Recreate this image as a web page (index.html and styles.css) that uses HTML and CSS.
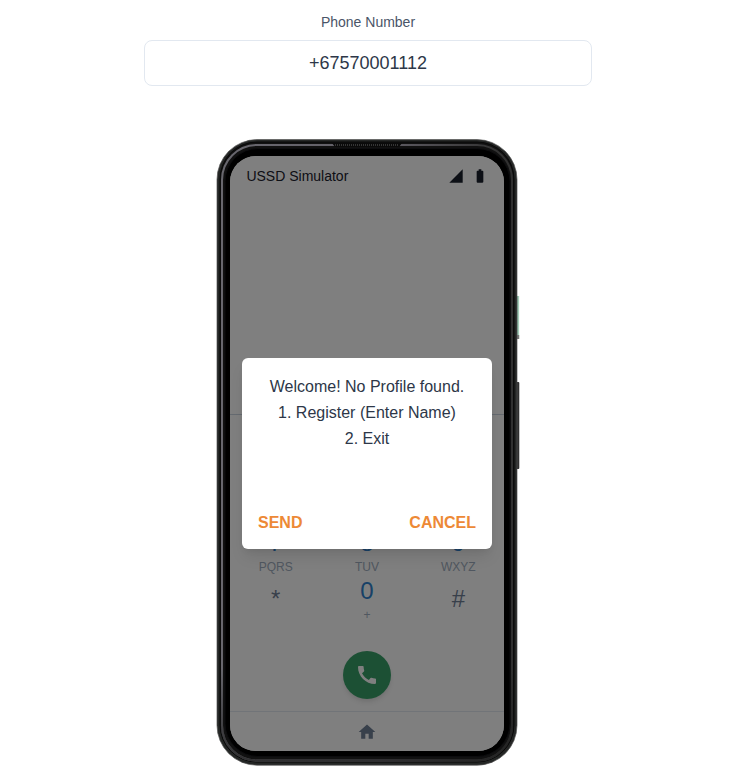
FILE: index.html
```html
<!DOCTYPE html>
<html lang="en">
<head>
<meta charset="utf-8">
<title>USSD Simulator</title>
<link rel="stylesheet" href="styles.css">
</head>
<body>
<main class="page">
  <label class="label" for="phone">Phone Number</label>
  <input class="number" id="phone" type="text" value="+67570001112">
  <section class="phone">
    <svg class="frame" width="306" height="628" viewBox="0 0 306 628" aria-hidden="true">
      <defs>
        <linearGradient id="rim" x1="0" y1="0" x2="1" y2="0">
          <stop offset="0" stop-color="#68676e"/><stop offset=".55" stop-color="#625f67"/><stop offset=".94" stop-color="#333"/><stop offset="1" stop-color="#303030"/>
        </linearGradient>
        <linearGradient id="shade" x1="0" y1="0" x2="0" y2="1">
          <stop offset="0" stop-color="#111" stop-opacity="0"/><stop offset=".85" stop-color="#111" stop-opacity="0"/><stop offset="1" stop-color="#222" stop-opacity=".8"/>
        </linearGradient>
        <linearGradient id="power" x1="0" y1="0" x2="1" y2="0">
          <stop offset="0" stop-color="#5f8f7b"/><stop offset="1" stop-color="#b9dfcc"/>
        </linearGradient>
      </defs>
      <rect x="299" y="157" width="3.2" height="43" fill="url(#power)"/>
      <rect x="299" y="196" width="3.2" height="4" fill="#777"/>
      <rect x="299" y="243" width="3.3" height="87" rx="1" fill="#303030"/>
      <rect x="0" y=".6" width="300" height="625.6" rx="40" fill="#242625" stroke="#555" stroke-width=".7"/>
      <rect x="3" y="3" width="294" height="620" rx="37" fill="#111" stroke="#090909"/>
      <rect x="5" y="6" width="290" height="615.5" rx="35" fill="none" stroke="url(#rim)" stroke-width="2"/>
      <rect x="5" y="6" width="290" height="615.5" rx="35" fill="none" stroke="url(#shade)" stroke-width="2.2"/>
      <rect x="8" y="9.5" width="285" height="608" rx="33" fill="#000" stroke="#0c0c0e"/>
      <path d="M115 4h70l-3 4h-64z" fill="#0a0a0a"/>
      <path d="M118 6h64" stroke="#444" stroke-width="1.4" stroke-dasharray="1 1"/>
    </svg>
    <div class="screen">
      <header class="status">
        <span>USSD Simulator</span>
        <span class="status-icons">
          <svg width="16" height="16" viewBox="0 0 24 24"><path d="M2 22h20V2z"/></svg>
          <svg width="16" height="16" viewBox="0 0 24 24"><path d="M15.67 4H14V2h-4v2H8.33C7.6 4 7 4.6 7 5.33v15.33C7 21.4 7.6 22 8.33 22h7.33c.74 0 1.34-.6 1.34-1.33V5.33C17 4.6 16.4 4 15.67 4z"/></svg>
        </span>
      </header>
      <div class="display"></div>
      <div class="keypad">
        <div class="key"><b>1</b></div>
        <div class="key"><b>2</b><small>ABC</small></div>
        <div class="key"><b>3</b><small>DEF</small></div>
        <div class="key"><b>4</b><small>GHI</small></div>
        <div class="key"><b>5</b><small>JKL</small></div>
        <div class="key"><b>6</b><small>MNO</small></div>
        <div class="key"><b>7</b><small>PQRS</small></div>
        <div class="key"><b>8</b><small>TUV</small></div>
        <div class="key"><b>9</b><small>WXYZ</small></div>
        <div class="key symbol"><b>*</b></div>
        <div class="key"><b>0</b><small>+</small></div>
        <div class="key symbol"><b>#</b></div>
      </div>
      <button class="call" aria-label="Call">
        <svg width="24" height="24" viewBox="0 0 24 24"><path d="M20.01 15.38c-1.23 0-2.42-.2-3.53-.56a.977.977 0 0 0-1.01.24l-1.57 1.97c-2.83-1.35-5.48-3.9-6.89-6.83l1.95-1.66c.27-.28.35-.67.24-1.02-.37-1.11-.56-2.3-.56-3.53 0-.54-.45-.99-.99-.99H4.19C3.65 3 3 3.24 3 3.99 3 13.28 10.73 21 20.01 21c.71 0 .99-.63.99-1.18v-3.45c0-.54-.45-.99-.99-.99z"/></svg>
      </button>
      <nav class="nav">
        <svg width="20" height="20" viewBox="0 0 24 24"><path d="M10 20v-6h4v6h5v-8h3L12 3 2 12h3v8z"/></svg>
      </nav>
      <div class="overlay">
        <div class="dialog">
          <p class="message">Welcome! No Profile found.<br>1. Register (Enter Name)<br>2. Exit</p>
          <div class="actions"><button>SEND</button><button>CANCEL</button></div>
        </div>
      </div>
    </div>
  </section>
</main>
</body>
</html>
```
FILE: styles.css
```css
* { box-sizing: border-box; }
body {
  margin: 0;
  background: #fff;
  color: #1a202c;
  font: 16px/24px "Liberation Sans", Arial, sans-serif;
}
button { margin: 0; padding: 0; border: 0; background: none; font: inherit; }
svg { display: block; fill: currentColor; }
.page {
  width: 448px;
  height: 784px;
  margin-left: 144px;
  padding-top: 12px;
  display: flex;
  flex-direction: column;
  align-items: center;
  overflow: hidden;
}
.label { font-size: 14px; line-height: 20px; color: #4a5568; }
.number {
  width: 100%;
  height: 46px;
  margin-top: 8px;
  border: 1px solid #e2e8f0;
  border-radius: 8px;
  background: #fff;
  color: #2d3748;
  font: 18px/28px "Liberation Sans", Arial, sans-serif;
  text-align: center;
}
.phone {
  position: relative;
  width: 302px;
  height: 628px;
  margin-top: 53px;
  padding: 17px 14px;
}
.frame { position: absolute; left: 0; top: 0; overflow: visible; }
.screen {
  position: relative;
  width: 274px;
  height: 595px;
  margin-left: -1px;
  border-radius: 26px;
  background: #fff;
  overflow: hidden;
  display: flex;
  flex-direction: column;
}
.status {
  height: 40px;
  padding: 0 16px 0 16.4px;
  display: flex;
  align-items: center;
  justify-content: space-between;
  font-size: 14px;
}
.status-icons { display: flex; gap: 8px; }
.display { height: 219px; border-bottom: 1px solid #cbd5e0; }
.keypad {
  margin-top: 16px;
  display: grid;
  grid-template-columns: repeat(3, 1fr);
  grid-auto-rows: 48px;
}
.key { display: flex; flex-direction: column; align-items: center; }
.key b { font-size: 24px; line-height: 32px; font-weight: 400; color: #3182ce; }
.key small { font-size: 12px; line-height: 16px; color: #a0aec0; }
.symbol { justify-content: center; }
.symbol b { color: #718096; }
.call {
  width: 48px;
  height: 48px;
  margin: 28px auto 12px;
  border-radius: 50%;
  background: #38a169;
  color: #fff;
  box-shadow: 0 4px 6px -1px rgba(0,0,0,.1), 0 2px 4px -1px rgba(0,0,0,.06);
  display: flex;
  align-items: center;
  justify-content: center;
}
.nav {
  height: 40px;
  border-top: 1px solid #e2e8f0;
  color: #718096;
  display: flex;
  align-items: center;
  justify-content: center;
}
.overlay {
  position: absolute;
  inset: 0;
  padding: 0 12px;
  background: rgba(0,0,0,.5);
  display: flex;
  align-items: center;
}
.dialog {
  width: 250px;
  height: 191px;
  padding: 16px 16px 15px;
  border-radius: 6px;
  background: #fff;
  box-shadow: 0 10px 15px -3px rgba(0,0,0,.1), 0 4px 6px -2px rgba(0,0,0,.05);
  display: flex;
  flex-direction: column;
  justify-content: space-between;
}
.message { margin: 0; line-height: 26px; text-align: center; color: #2d3748; }
.actions { display: flex; justify-content: space-between; }
.actions button { font-weight: 700; line-height: 22px; color: #ed8936; }
```
